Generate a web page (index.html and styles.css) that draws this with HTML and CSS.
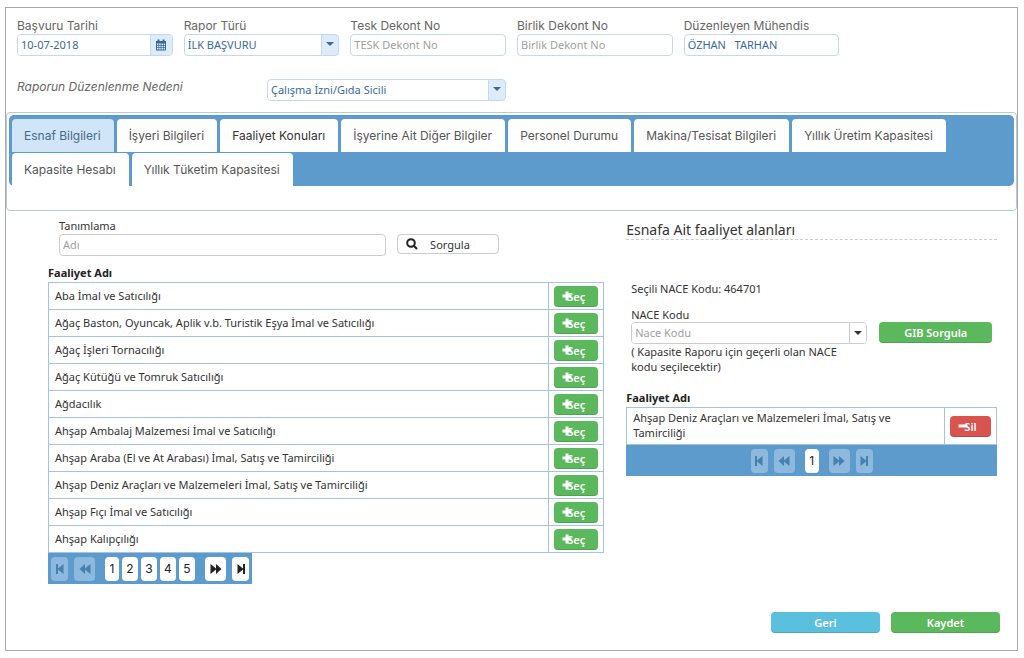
FILE: index.html
```html
<!DOCTYPE html>
<html lang="tr">
<head>
<meta charset="utf-8">
<meta name="viewport" content="width=device-width, initial-scale=1">
<title>Kapasite Raporu</title>
<link rel="stylesheet" href="styles.css">
</head>
<body>
<svg class="sprite" aria-hidden="true">
  <symbol id="i-first" viewBox="0 0 12 12"><path d="M2 1h2v4.600L9.500 1v10L4 6.400V11H2z"/></symbol>
  <symbol id="i-prev" viewBox="0 0 12 12"><path d="M6 1v4.400L11.500 1v10L6 6.600V11L.5 6z"/></symbol>
  <symbol id="i-next" viewBox="0 0 12 12"><path d="M6 1v4.400L.5 1v10L6 6.600V11l5.500-5z"/></symbol>
  <symbol id="i-last" viewBox="0 0 12 12"><path d="M10 1H8v4.600L2.500 1v10L8 6.400V11h2z"/></symbol>
  <symbol id="i-plus" viewBox="0 0 10 10"><path d="M3.500 .5h3v3h3v3h-3v3h-3v-3h-3v-3h3z"/></symbol>
  <symbol id="i-minus" viewBox="0 0 10 10"><path d="M.5 3.500h9v3h-9z"/></symbol>
</svg>
<main class="frame">
  <form class="report">
    <div class="fields">
      <div class="field">
        <label for="tarih">Başvuru Tarihi</label>
        <div class="combo">
          <input id="tarih" type="text" value="10-07-2018">
          <button class="combo-btn date-btn" type="button" aria-label="Takvim">
            <svg viewBox="0 0 12 12"><path fill-rule="evenodd" d="M1 2h1.500V.5h2V2h3V.5h2V2H11v9.500H1zM2 4.500v1.500h1.500V4.500zm2.200 0v1.500h1.500V4.500zm2.300 0v1.500H8V4.500zm2.200 0v1.500h1.300V4.500zM2 6.800v1.500h1.500V6.800zm2.200 0v1.500h1.500V6.800zm2.300 0v1.500H8V6.800zm2.200 0v1.500h1.300V6.800zM2 9.100v1.400h1.500V9.100zm2.200 0v1.400h1.500V9.100zm2.300 0v1.400H8V9.100zm2.200 0v1.400h1.300V9.100z"/></svg>
          </button>
        </div>
      </div>
      <div class="field">
        <label for="tur">Rapor Türü</label>
        <div class="select"><select id="tur"><option>İLK BAŞVURU</option></select></div>
      </div>
      <div class="field">
        <label for="tesk">Tesk Dekont No</label>
        <input id="tesk" class="box" type="text" placeholder="TESK Dekont No">
      </div>
      <div class="field">
        <label for="birlik">Birlik Dekont No</label>
        <input id="birlik" class="box" type="text" placeholder="Birlik Dekont No">
      </div>
      <div class="field">
        <label for="muhendis">Düzenleyen Mühendis</label>
        <input id="muhendis" class="box" type="text" value="ÖZHAN   TARHAN">
      </div>
    </div>
    <div class="reason">
      <label for="neden">Raporun Düzenlenme Nedeni</label>
      <div class="select"><select id="neden"><option>Çalışma İzni/Gıda Sicili</option></select></div>
    </div>
  </form>

  <section class="tabs">
    <div class="tablist" role="tablist">
      <button class="tab active" role="tab" aria-selected="true">Esnaf Bilgileri</button>
      <button class="tab" role="tab">İşyeri Bilgileri</button>
      <button class="tab visited" role="tab">Faaliyet Konuları</button>
      <button class="tab" role="tab">İşyerine Ait Diğer Bilgiler</button>
      <button class="tab" role="tab">Personel Durumu</button>
      <button class="tab" role="tab">Makina/Tesisat Bilgileri</button>
      <button class="tab" role="tab">Yıllık Üretim Kapasitesi</button>
      <button class="tab" role="tab">Kapasite Hesabı</button>
      <button class="tab" role="tab">Yıllık Tüketim Kapasitesi</button>
    </div>
  </section>

  <div class="panels">
    <section class="activities">
      <form class="search">
        <label for="adi">Tanımlama</label>
        <div class="search-row">
          <input id="adi" class="box" type="text" placeholder="Adı">
          <button class="query" type="button">
            <svg viewBox="0 0 12 12"><circle cx="5" cy="5" r="3.800"/><path d="M7.800 7.800l3.200 3.200"/></svg>
            <span>Sorgula</span>
          </button>
        </div>
      </form>
      <table class="grid">
        <caption>Faaliyet Adı</caption>
        <tbody>
          <tr><td>Aba İmal ve Satıcılığı</td><td class="action"><button class="btn green pick"><svg><use href="#i-plus"/></svg>Seç</button></td></tr>
          <tr><td>Ağaç Baston, Oyuncak, Aplik v.b. Turistik Eşya İmal ve Satıcılığı</td><td class="action"><button class="btn green pick"><svg><use href="#i-plus"/></svg>Seç</button></td></tr>
          <tr><td>Ağaç İşleri Tornacılığı</td><td class="action"><button class="btn green pick"><svg><use href="#i-plus"/></svg>Seç</button></td></tr>
          <tr><td>Ağaç Kütüğü ve Tomruk Satıcılığı</td><td class="action"><button class="btn green pick"><svg><use href="#i-plus"/></svg>Seç</button></td></tr>
          <tr><td>Ağdacılık</td><td class="action"><button class="btn green pick"><svg><use href="#i-plus"/></svg>Seç</button></td></tr>
          <tr><td>Ahşap Ambalaj Malzemesi İmal ve Satıcılığı</td><td class="action"><button class="btn green pick"><svg><use href="#i-plus"/></svg>Seç</button></td></tr>
          <tr><td>Ahşap Araba (El ve At Arabası) İmal, Satış ve Tamirciliği</td><td class="action"><button class="btn green pick"><svg><use href="#i-plus"/></svg>Seç</button></td></tr>
          <tr><td>Ahşap Deniz Araçları ve Malzemeleri İmal, Satış ve Tamirciliği</td><td class="action"><button class="btn green pick"><svg><use href="#i-plus"/></svg>Seç</button></td></tr>
          <tr><td>Ahşap Fıçı İmal ve Satıcılığı</td><td class="action"><button class="btn green pick"><svg><use href="#i-plus"/></svg>Seç</button></td></tr>
          <tr><td>Ahşap Kalıpçılığı</td><td class="action"><button class="btn green pick"><svg><use href="#i-plus"/></svg>Seç</button></td></tr>
        </tbody>
      </table>
      <nav class="pager compact" aria-label="Faaliyet sayfaları">
        <button class="edge" disabled aria-label="İlk"><svg><use href="#i-first"/></svg></button>
        <button class="step" disabled aria-label="Önceki"><svg><use href="#i-prev"/></svg></button>
        <span class="pages"><button>1</button><button>2</button><button>3</button><button>4</button><button>5</button></span>
        <button class="step" aria-label="Sonraki"><svg><use href="#i-next"/></svg></button>
        <button class="edge" aria-label="Son"><svg><use href="#i-last"/></svg></button>
      </nav>
    </section>

    <section class="selected">
      <h2>Esnafa Ait faaliyet alanları</h2>
      <div class="nace">
        <p class="code">Seçili NACE Kodu: 464701</p>
        <label for="nace">NACE Kodu</label>
        <div class="nace-row">
          <div class="combo plain">
            <input id="nace" type="text" placeholder="Nace Kodu">
            <button class="combo-btn" type="button" aria-label="Listeyi aç"><span class="caret"></span></button>
          </div>
          <button class="btn green" type="button">GIB Sorgula</button>
          <p class="hint">( Kapasite Raporu için geçerli olan NACE kodu seçilecektir)</p>
        </div>
      </div>
      <table class="grid">
        <caption>Faaliyet Adı</caption>
        <tbody>
          <tr><td>Ahşap Deniz Araçları ve Malzemeleri İmal, Satış ve Tamirciliği</td><td class="action narrow"><button class="btn red pick"><svg><use href="#i-minus"/></svg>Sil</button></td></tr>
        </tbody>
      </table>
      <nav class="pager" aria-label="Seçili faaliyet sayfaları">
        <button class="edge" disabled aria-label="İlk"><svg><use href="#i-first"/></svg></button>
        <button class="step" disabled aria-label="Önceki"><svg><use href="#i-prev"/></svg></button>
        <span class="pages"><button>1</button></span>
        <button class="step" disabled aria-label="Sonraki"><svg><use href="#i-next"/></svg></button>
        <button class="edge" disabled aria-label="Son"><svg><use href="#i-last"/></svg></button>
      </nav>
    </section>
  </div>

  <footer class="footer">
    <button class="btn sky">Geri</button>
    <button class="btn green">Kaydet</button>
  </footer>
</main>
</body>
</html>
```
FILE: styles.css
```css
* { box-sizing: border-box; }
body {
  margin: 0;
  padding: 7px 6px 6px 5px;
  background: #fff;
  color: #333;
  font: 11px/15px "Noto Sans", "Open Sans", sans-serif;
}
button, input, select { margin: 0; font: inherit; color: inherit; }
button { padding: 0; border: 0; cursor: pointer; }
p, h2 { margin: 0; }
svg { display: block; width: 12px; height: 12px; fill: currentColor; }
.sprite { display: none; }
.frame { border: 1px solid #a8a8a8; }

/* report fields */
.report { padding: 10px 11px; color: #3a6a9a; }
.report label { color: #666; font: 12px/16px Inter, "Noto Sans", sans-serif; }
.fields { display: grid; grid-template-columns: repeat(6, 1fr); gap: 11px; }
.field { display: flex; flex-direction: column; min-width: 0; }
.reason { display: grid; grid-template-columns: repeat(4, 1fr); gap: 11px; margin-top: 23px; }
.reason label { font-style: italic; }

.box, .combo, .select {
  width: 100%;
  height: 22px;
  border: 1px solid #c5d9ec;
  border-radius: 4px;
  background: #fff;
}
.box { padding: 0 3px 2px; outline: 0; }
input::placeholder { color: #a0a0a0; opacity: 1; }
.combo { display: flex; overflow: hidden; }
.combo input { flex: 1; min-width: 0; padding: 0 3px 2px; border: 0; outline: 0; }
.combo-btn { display: grid; place-items: center; width: 17px; border-left: 1px solid #c5d9ec; background: #dcecfa; }
.date-btn { width: 22px; }
.caret, .select::after { border: 4px solid transparent; border-top-color: currentColor; border-bottom: 0; }
.select { position: relative; overflow: hidden; background: linear-gradient(#dcecfa, #dcecfa) right / 16px 100% no-repeat; }
.select select {
  width: 100%;
  height: 100%;
  padding: 0 20px 2px 3px;
  border: 0;
  outline: 0;
  background: linear-gradient(#c5d9ec, #c5d9ec) right 16px top / 1px 100% no-repeat;
  appearance: none;
}
.select::after { content: ""; position: absolute; top: 7px; right: 4px; pointer-events: none; }

/* tabs */
.tabs { margin-top: 1px; padding: 2px 2px 24px; border: 1px solid #b4cbdc; border-radius: 4px; }
.tablist {
  display: flex;
  flex-wrap: wrap;
  gap: 1px 3px;
  padding: 4px 64px 0 3px;
  border-radius: 5px;
  background: #5c9bcc;
}
.tab {
  height: 33px;
  padding: 0 13px 0 12px;
  border-radius: 4px 4px 0 0;
  background: #fff;
  color: #555;
  font: 12px/16px Inter, "Noto Sans", sans-serif;
}
.tab.active { background: #d0e5f7; color: #4a6a85; }
.tab.visited { color: #333; }

/* content panels */
.panels { display: grid; grid-template-columns: 3fr 2fr; gap: 22px; padding: 7px 20px 28px 42px; }
.search { padding: 0 0 9px 11px; }
.search label { display: block; line-height: 16px; }
.search-row { display: flex; align-items: start; gap: 11px; }
.search .box { width: 60%; border-color: #ccc; }
.query {
  display: flex;
  align-items: center;
  gap: 12px;
  width: 102px;
  height: 20px;
  padding: 0 8px;
  border: 1px solid #ccc;
  border-radius: 4px;
  background: #fff;
}
.query svg { fill: none; stroke: #222; stroke-width: 2; }

.grid { width: 100%; border-collapse: collapse; }
.grid caption { padding-bottom: 1px; color: #222; font-weight: 700; line-height: 16px; text-align: left; }
.grid td { height: 27px; padding: 2px 6px 4px; border: 1px solid #a3c4e0; }
.grid .action { width: 55px; padding: 2px 5px; }
.grid .narrow { width: 52px; }

.btn {
  height: 21px;
  border-radius: 4px;
  box-shadow: inset 0 -1px rgba(0, 0, 0, .12);
  color: #fff;
  font-weight: 600;
}
.green { background: #5cb85c; }
.red { background: #d9534f; }
.sky { background: #5bc0de; }
.pick { display: block; position: relative; width: 100%; }
.pick svg { position: absolute; top: 5px; left: 8px; width: 10px; height: 10px; }

.pager {
  display: flex;
  align-items: center;
  justify-content: center;
  gap: 6px;
  height: 31px;
  padding: 0 3px;
  background: #5c9bcc;
}
.compact { width: max-content; }
.pager button { display: grid; place-items: center; height: 24px; border-radius: 4px; background: #fff; color: #222; }
.pager .edge { width: 17px; }
.pager .step { width: 21px; }
.pager button:disabled { background: #8cb9dd; color: #4680ac; }
.pages { display: flex; gap: 3px; margin: 0 4px; }
.pages button { width: 16px; font-family: Inter, "Noto Sans", sans-serif; font-size: 12px; }
.pages button:first-child { width: 14px; }

.selected h2 { padding: 2px 0 0; border-bottom: 1px dashed #ccc; font-size: 14px; font-weight: 400; line-height: 19px; }
.nace { padding: 41px 5px 16px; }
.code { margin-bottom: 11px; }
.nace label { display: block; }
.nace-row { display: grid; grid-template-columns: 21fr 10fr; column-gap: 12px; }
.hint { padding-right: 12px; }
.plain, .plain .combo-btn { border-color: #ccc; }
.plain .combo-btn { background: #fff; }

.footer { display: flex; justify-content: flex-end; gap: 11px; padding: 0 17px 17px; }
.footer .btn { width: 109px; }
```
